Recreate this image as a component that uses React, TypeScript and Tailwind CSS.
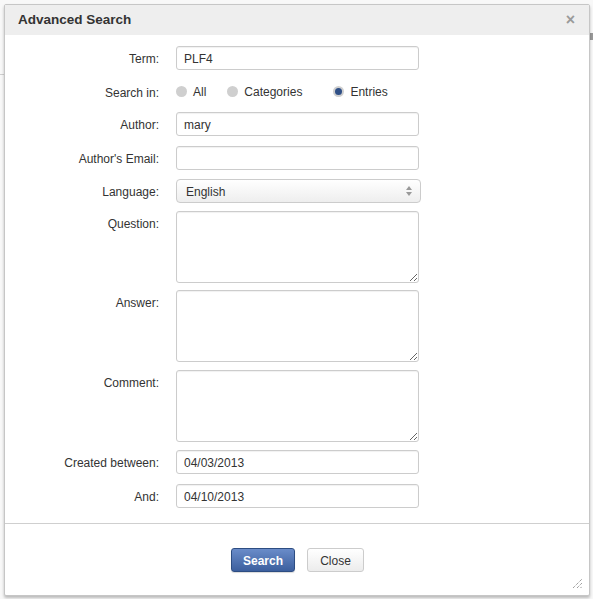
import React from "react";

const Label = ({ text }: { text: string }) => (
  <div className="w-[154px] shrink-0 text-right h-[24px] leading-[24px] pt-[1px] text-[12px] text-[#333]">
    {text}
  </div>
);

const inputCls =
  "w-[243px] h-[24px] border border-[#ccc] rounded-[3px] px-[7px] pt-[2px] text-[12px] text-[#333] bg-white outline-none shadow-[inset_0_1px_1px_rgba(0,0,0,0.06)]";

const areaCls =
  "w-[243px] h-[72px] border border-[#ccc] rounded-[3px] px-[7px] py-[4px] text-[12px] text-[#333] bg-white outline-none shadow-[inset_0_1px_1px_rgba(0,0,0,0.06)]";

const Radio = ({ label, checked }: { label: string; checked?: boolean }) => (
  <label className="flex items-center gap-[6px] text-[12px] text-[#333]">
    <span className="w-[11px] h-[11px] rounded-full bg-[#cfcfcf] flex items-center justify-center">
      {checked && <span className="w-[7px] h-[7px] rounded-full bg-[#2f4f86]" />}
    </span>
    {label}
  </label>
);

const App = () => {
  return (
    <div className="relative w-[593px] h-[599px] bg-[#f8f8f8] pt-[4px] pl-[4px] font-['Liberation_Sans',Arial,sans-serif]">
      <div className="absolute left-0 top-[74px] w-[5px] h-px bg-[#cfcfcf]" />
      <div className="absolute right-0 top-[33px] w-[3px] h-[7px] bg-[#9a9a9a]" />

      <div className="relative w-[586px] h-[592px] bg-white border border-[#c6c6c6] rounded-[2px] shadow-[0_2px_3px_rgba(0,0,0,0.25)] flex flex-col">
        <div className="h-[30px] bg-[#eeeeee] flex items-center justify-between pl-[13px] pr-[14px]">
          <span className="text-[13.5px] font-bold text-[#333]">Advanced Search</span>
          <span className="text-[#9a9a9a] text-[16px] font-bold leading-none">×</span>
        </div>

        <div className="flex flex-col">
          <div className="flex items-start gap-[17px] mt-[11px]">
            <Label text="Term:" />
            <input className={inputCls} defaultValue="PLF4" />
          </div>

          <div className="flex items-center gap-[17px] mt-[10px] h-[22px] pt-[1px]">
            <Label text="Search in:" />
            <div className="flex items-center">
              <Radio label="All" />
              <div className="ml-[21px]">
                <Radio label="Categories" />
              </div>
              <div className="ml-[31px]">
                <Radio label="Entries" checked />
              </div>
            </div>
          </div>

          <div className="flex items-start gap-[17px] mt-[10px]">
            <Label text="Author:" />
            <input className={inputCls} defaultValue="mary" />
          </div>

          <div className="flex items-start gap-[17px] mt-[10px]">
            <Label text="Author's Email:" />
            <input className={inputCls} />
          </div>

          <div className="flex items-start gap-[17px] mt-[9px]">
            <Label text="Language:" />
            <div className="relative w-[245px] h-[24px] border border-[#ccc] rounded-[4px] bg-gradient-to-b from-white to-[#eeeeee] text-[12px] text-[#333] leading-[22px] pt-[1px] pl-[9px]">
              English
              <svg className="absolute right-[8px] top-[6px]" width="6" height="10" viewBox="0 0 6 10">
                <path d="M0 4 L3 0 L6 4 Z" fill="#999" />
                <path d="M0 6 L3 10 L6 6 Z" fill="#999" />
              </svg>
            </div>
          </div>

          <div className="flex items-start gap-[17px] mt-[8px]">
            <Label text="Question:" />
            <textarea className={areaCls} />
          </div>

          <div className="flex items-start gap-[17px] mt-[7px]">
            <Label text="Answer:" />
            <textarea className={areaCls} />
          </div>

          <div className="flex items-start gap-[17px] mt-[8px]">
            <Label text="Comment:" />
            <textarea className={areaCls} />
          </div>

          <div className="flex items-start gap-[17px] mt-[8px]">
            <Label text="Created between:" />
            <input className={inputCls} defaultValue="04/03/2013" />
          </div>

          <div className="flex items-start gap-[17px] mt-[10px]">
            <Label text="And:" />
            <input className={inputCls} defaultValue="04/10/2013" />
          </div>
        </div>

        <div className="mt-[15px] h-px bg-[#cfcfcf]" />

        <div className="flex justify-center gap-[12px] mt-[24px] pl-[1px]">
          <button className="w-[64px] h-[24px] pt-[1px] rounded-[3px] border border-[#2d4d82] bg-gradient-to-b from-[#6a8cc9] to-[#3c5f9e] text-white text-[12px] font-bold shadow-[0_1px_1px_rgba(0,0,0,0.15)]">
            Search
          </button>
          <button className="w-[57px] h-[24px] pt-[1px] rounded-[3px] border border-[#cccccc] bg-gradient-to-b from-white to-[#ececec] text-[#333] text-[12px]">
            Close
          </button>
        </div>

        <svg className="absolute right-[6px] bottom-[6px]" width="11" height="11" viewBox="0 0 11 11">
          <path d="M1 10 L10 1 M5 10 L10 5 M8.5 10 L10 8.5" stroke="#777" strokeWidth="1" strokeDasharray="1 1" />
        </svg>
      </div>
    </div>
  );
};

export default App;
